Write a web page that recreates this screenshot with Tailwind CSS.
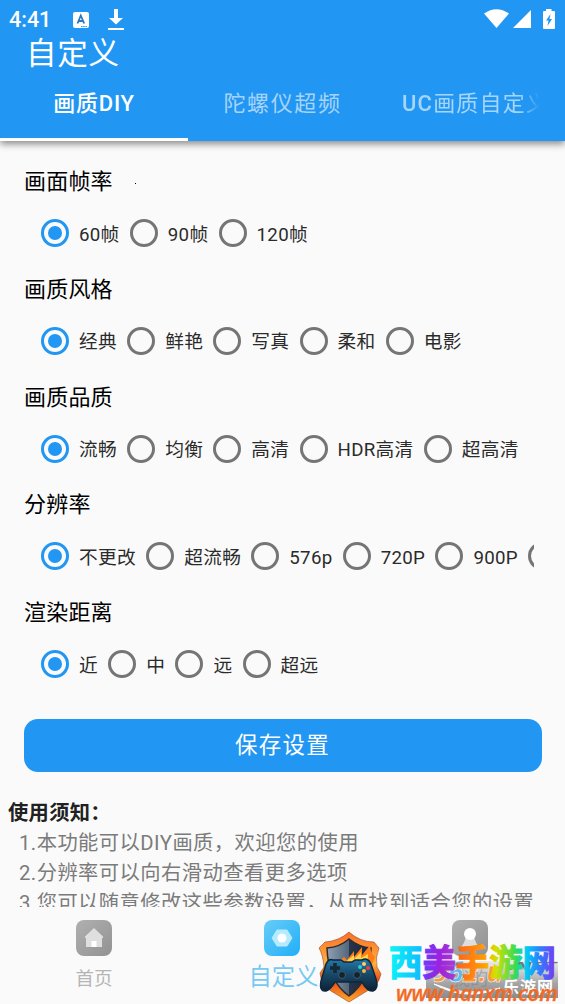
<!DOCTYPE html>
<html lang="zh-CN">

<head>
    <meta charset="UTF-8" />
    <meta name="viewport" content="width=device-width, initial-scale=1.0" />
    <title>自定义</title>
    <script src="https://cdn.jsdelivr.net/npm/@tailwindcss/browser@4"></script>
</head>

<body class="relative flex h-[1004px] w-[565px] flex-col overflow-hidden bg-[#fafafa] font-[Roboto,'Noto_Sans_CJK_SC',sans-serif] text-black">

    <!-- Header -->
    <header class="relative z-10 flex h-[141px] shrink-0 flex-col bg-[#2196f3] text-white shadow-[0_3px_7px_rgba(0,0,0,0.45)]">
        <div class="flex h-[37px] shrink-0 items-center pt-[3px] pr-[10px] pl-[9px]">
            <span class="w-[64px] text-[21.500px] font-medium">4:41</span>
            <svg class="mr-[19px] size-[16px]" viewBox="0 0 16 16">
                <rect width="16" height="16" rx="2" fill="#fff" />
                <path d="M4.500 11.500L7.800 3.500L11.200 11.500M5.700 9H10" fill="none" stroke="#2b78c2" stroke-width="1.800" />
                <path d="M8 14.500H14" stroke="#2196f3" stroke-dasharray="1.500 .700" />
            </svg>
            <svg class="h-[22px] w-[16px]" viewBox="0 0 16 22" fill="#fff">
                <path d="M6 0H10V9H15L8 15.500L1 9H6ZM0 19H16V21H0Z" />
            </svg>
            <div class="ml-auto flex items-center pb-[3px]">
                <svg class="mr-[4px] h-[19px] w-[25px]" viewBox="0 0 25 19" fill="#fff">
                    <path d="M0 4.500Q12.500-4 25 4.500L12.500 19Z" />
                </svg>
                <svg class="mr-[12px] size-[18px]" viewBox="0 0 18 18" fill="#fff">
                    <path d="M18 0V18H0Z" />
                </svg>
                <svg class="h-[20px] w-[12px]" viewBox="0 0 12 20">
                    <path d="M3 2V0H8.500V2H11Q12 2 12 3V19Q12 20 11 20H1Q0 20 0 19V3Q0 2 1 2Z" fill="#fff" />
                    <path d="M7.500 5L3 11.500H5.500L4.500 17L9 10H6.500Z" fill="#2196f3" />
                </svg>
            </div>
        </div>
        <h1 class="h-[33px] shrink-0 pl-[26px] text-[30.500px] leading-[33px] tracking-[0.800px]">自定义</h1>
        <nav class="grid h-[71px] w-[564px] grid-cols-3 text-[22px] leading-[68px] font-medium whitespace-nowrap">
            <div class="border-b-[3px] border-white text-center tracking-[0.800px]">画质DIY</div>
            <div class="pl-px text-center font-normal tracking-[1.600px] text-white/60">陀螺仪超频</div>
            <div class="ml-[26px] w-[138px] overflow-hidden mask-r-from-85% tracking-[1.200px] text-white/60">UC<span class="font-normal">画质自定义</span></div>
        </nav>
    </header>

    <!-- Settings -->
    <main class="flex h-[766px] shrink-0 flex-col overflow-hidden">
        <div id="groups" class="pt-[20px]"></div>
        <button class="mt-[19px] ml-[23.500px] h-[53px] w-[518px] shrink-0 rounded-[14px] bg-[#2196f3] pt-px text-[22.500px] tracking-[1.200px] text-white">保存设置</button>
        <section class="pt-[26px] text-[20.300px] leading-[30px] whitespace-nowrap">
            <h2 class="pl-[8px] font-bold tracking-[0.300px] text-[#212121]">使用须知：</h2>
            <div class="pl-[19px] tracking-[0.450px] text-[#7b7b7b]">
                <p>1.本功能可以DIY画质，欢迎您的使用</p>
                <p>2.分辨率可以向右滑动查看更多选项</p>
                <p>3.您可以随意修改这些参数设置，从而找到适合您的设置</p>
            </div>
        </section>
    </main>

    <!-- Bottom bar -->
    <footer class="grid h-[97px] w-[564px] shrink-0 grid-cols-3 text-[18.500px] text-[#b5b5b5]">
        <div class="flex flex-col items-center pt-[13px]">
            <svg class="size-[36px]" viewBox="0 0 36 36">
                <defs>
                    <linearGradient id="gray" x2="1" y2="1">
                        <stop stop-color="#b0b0b0" />
                        <stop offset="1" stop-color="#929292" />
                    </linearGradient>
                </defs>
                <rect width="36" height="36" rx="8" fill="url(#gray)" />
                <path d="M18 8L27 16.500V18H26V27H10V18H9V16.500Z" fill="#dfdfdf" />
                <rect x="15.500" y="21" width="5" height="6" fill="#fff" />
            </svg>
            <span class="mt-[10px] leading-[27px]">首页</span>
        </div>
        <div class="flex flex-col items-center pt-[13px]">
            <svg class="size-[36px]" viewBox="0 0 36 36">
                <defs>
                    <linearGradient id="blue" x2="1" y2="1">
                        <stop stop-color="#66cdf7" />
                        <stop offset="1" stop-color="#22aef8" />
                    </linearGradient>
                </defs>
                <rect width="36" height="36" rx="8" fill="url(#blue)" />
                <path d="M13 10H23L28 18L23 26H13L8 18Z" fill="#b6ebff" stroke="#b6ebff" stroke-linejoin="round" />
                <circle cx="18" cy="18" r="4.500" fill="#fff" />
            </svg>
            <span class="mt-[6px] ml-[3px] text-[23.300px] leading-[30px] text-[#75c9f2]">自定义</span>
        </div>
        <div class="flex flex-col items-center pt-[13px]">
            <svg class="size-[36px]" viewBox="0 0 36 36">
                <rect width="36" height="36" rx="8" fill="url(#gray)" />
                <path d="M14 17H22Q24 24 27 27H9Q12 24 14 17Z" fill="#dedede" />
                <circle cx="18" cy="14" r="6" fill="#fff" />
            </svg>
            <span class="mt-[10px] leading-[27px]">我的</span>
        </div>
    </footer>

    <!-- Site marks over the bottom bar -->
    <svg class="absolute top-[925px] left-[310px] z-20 h-[79px] w-[255px]" viewBox="310 925 255 79">
        <defs>
            <linearGradient id="plate" x2="0" y2="1">
                <stop stop-color="#aaa" stop-opacity="0.200" />
                <stop offset="0.600" stop-color="#888" stop-opacity="0.750" />
                <stop offset="1" stop-color="#777" stop-opacity="0.850" />
            </linearGradient>
            <linearGradient id="fire" x2="0" y2="1">
                <stop stop-color="#f9702b" />
                <stop offset="0.450" stop-color="#ffb13b" />
                <stop offset="0.700" stop-color="#e54a12" />
                <stop offset="1" stop-color="#ffac2e" />
            </linearGradient>
            <linearGradient id="steel">
                <stop stop-color="#8fa1b2" />
                <stop offset="0.500" stop-color="#53677c" />
                <stop offset="0.510" stop-color="#25354a" />
                <stop offset="1" stop-color="#1b2536" />
            </linearGradient>
            <linearGradient id="pad" x2="0" y2="1">
                <stop stop-color="#2379aa" />
                <stop offset="0.500" stop-color="#174766" />
                <stop offset="1" stop-color="#0d2135" />
            </linearGradient>
            <linearGradient id="rainbow" gradientUnits="userSpaceOnUse" x1="390" y1="960" x2="555" y2="966">
                <stop stop-color="#0cf3f5" />
                <stop offset="0.180" stop-color="#0fc0ff" />
                <stop offset="0.200" stop-color="#6a3cff" />
                <stop offset="0.300" stop-color="#9c22df" />
                <stop offset="0.390" stop-color="#a43cd0" />
                <stop offset="0.410" stop-color="#ff6420" />
                <stop offset="0.570" stop-color="#ff9d00" />
                <stop offset="0.640" stop-color="#d3e000" />
                <stop offset="0.760" stop-color="#36dc53" />
                <stop offset="0.820" stop-color="#00d0f2" />
                <stop offset="0.900" stop-color="#2684ff" />
                <stop offset="1" stop-color="#7a38f2" />
            </linearGradient>
        </defs>

        <rect x="426" y="961" width="132" height="37" fill="url(#plate)" />
        <g font-family="Open Sans, sans-serif" font-weight="700" font-style="italic">
            <text x="433" y="982" font-size="28" textLength="70" lengthAdjust="spacingAndGlyphs" fill="#f39845" stroke="#fff" stroke-width="0.500">9<tspan fill="#5fb6ea">6</tspan>2.u</text>
            <text x="508" y="970" font-size="10" textLength="48" lengthAdjust="spacingAndGlyphs" fill="#777">.NET</text>
        </g>
        <path d="M434 984Q466 1002 500 988Q466 998 434 984Z" fill="#fff" stroke="#fff" />
        <text x="503" y="993" font-family="Noto Sans CJK SC, sans-serif" font-weight="700" font-size="16" textLength="50" fill="#fff">乐游网</text>

        <path d="M349 932Q360 942 374 942L379 948Q375 958 377 967L381 974Q378 987 367 991L349 1002L331 991Q321 985 320 973L324 967Q323 955 319 948L325 942Q339 941 349 932Z" fill="url(#fire)" stroke="#8b2b18" stroke-width="0.500" />
        <path d="M349 939Q359 947 371 948Q370 981 349 996Q328 981 327 948Q340 947 349 939Z" fill="url(#steel)" stroke="#302b31" stroke-width="1.500" />
        <path d="M337 963L344 957L347 960L354 951V957L362 947V955L371 944Q369 952 375 957L371 967Z" fill="#ff7c16" />
        <path d="M344 963L354 955V959L361 952L361 958L368 954L368 966Z" fill="#ffd64b" />
        <path d="M333 960Q329 958 326 964L321 981Q319 992 326 991Q330 990 335 982H362Q367 992 373 991Q379 989 376 979L371 964Q368 957 362 960H355L352 962H344L341 960Z" fill="url(#pad)" stroke="#10263b" stroke-width="1.500" />
        <path d="M335 963V973M330 968H340" stroke="#162937" stroke-width="3.500" />
        <circle cx="342" cy="975" r="3.500" fill="#17212c" stroke="#376078" />
        <circle cx="357" cy="975" r="3.500" fill="#17212c" stroke="#376078" />
        <circle cx="364" cy="964" r="2" fill="#ffd25a" />
        <circle cx="368" cy="968" r="2" fill="#ef3c42" />
        <circle cx="364" cy="971" r="2" fill="#f7b934" />
        <circle cx="360" cy="967" r="2" fill="#30c7da" />

        <text x="389" y="976" font-family="Noto Sans CJK SC, sans-serif" font-weight="700" font-size="36" textLength="167" lengthAdjust="spacingAndGlyphs" fill="url(#rainbow)" stroke="url(#rainbow)" stroke-width="1.200">西美手游网</text>
        <text x="396" y="1001" font-family="Open Sans, sans-serif" font-weight="600" font-style="italic" font-size="21" textLength="162" fill="#f36a24" stroke="#f36a24" stroke-width="0.300">www.hanxm.com</text>
    </svg>

    <script>
        const groups = [
            ['画面帧率', ['60帧', '90帧', '120帧']],
            ['画质风格', ['经典', '鲜艳', '写真', '柔和', '电影']],
            ['画质品质', ['流畅', '均衡', '高清', 'HDR高清', '超高清']],
            ['分辨率', ['不更改', '超流畅', '576p', '720P', '900P', '1080P']],
            ['渲染距离', ['近', '中', '远', '超远']],
        ];

        // The first option of every group is the selected one
        function radio(label, i) {
            const ring = i === 0
                ? '<span class="flex size-[28px] shrink-0 items-center justify-center rounded-full border-[3px] border-[#2196f3]"><span class="size-[14px] rounded-full bg-[#2196f3]"></span></span>'
                : '<span class="size-[28px] shrink-0 rounded-full border-[3px] border-[#757575]"></span>';
            return `<label class="flex shrink-0 items-center gap-[10px]">${ring}<span class="pt-[3px] text-[18.700px] leading-[26px] tracking-[0.300px] text-[#2b2b2b]">${label}</span></label>`;
        }

        document.getElementById('groups').innerHTML = groups.map(([title, options], i) => `
            <section class="h-[107.800px]">
                <h2 class="flex h-[40px] items-center pt-px pl-[24px] text-[22px] tracking-[0.200px]">${title}${i === 0 ? '<span class="mt-[3px] ml-[22px] size-px bg-black"></span>' : ''}</h2>
                <div class="ml-[41px] flex h-[64px] w-[493px] items-center gap-[10.200px] overflow-hidden whitespace-nowrap">${options.map(radio).join('')}</div>
            </section>`).join('');
    </script>
</body>

</html>
